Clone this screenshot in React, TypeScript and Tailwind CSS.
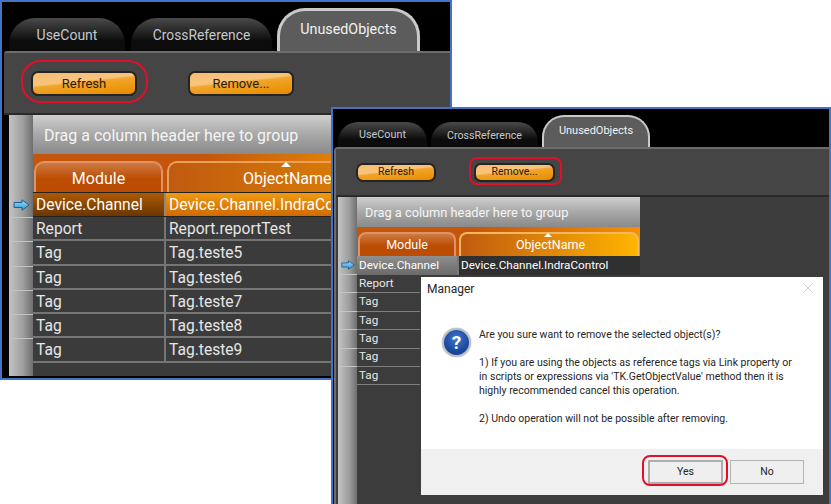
import React from "react";

const FONT = "font-['Roboto','Noto_Sans',sans-serif]";
const BTN =
  "flex items-center justify-center rounded-[7px] border-2 border-[#242424] text-[#2b1a05] bg-[linear-gradient(174deg,#f5bd72_0%,#f8c47c_40%,#f1a52c_47%,#ee9a14_70%,#e58a00_100%)]";

function Arrow({ w, h }: { w: number; h: number }) {
  return (
    <svg width={w} height={h} viewBox="0 0 17 12">
      <defs>
        <linearGradient id="arrowFill" x1="0" y1="0" x2="0" y2="1">
          <stop offset="0" stopColor="#9fdcf8" />
          <stop offset="1" stopColor="#2a9ad6" />
        </linearGradient>
      </defs>
      <path d="M1 3.5H9V0.8L16 6L9 11.2V8.5H1Z" fill="url(#arrowFill)" stroke="#1d5f96" strokeWidth="1" />
    </svg>
  );
}

function Question() {
  return (
    <div className="flex h-[29px] w-[29px] items-center justify-center rounded-full border-2 border-[#b9c0c9] bg-[radial-gradient(circle_at_50%_35%,#3f78cf_0%,#1c4aa0_60%,#10307a_100%)] text-[19px] font-bold leading-none text-white shadow-[0_0_1px_#555]">
      ?
    </div>
  );
}

const leftRows = [
  ["Report", "Report.reportTest"],
  ["Tag", "Tag.teste5"],
  ["Tag", "Tag.teste6"],
  ["Tag", "Tag.teste7"],
  ["Tag", "Tag.teste8"],
  ["Tag", "Tag.teste9"],
];

function LeftWindow() {
  return (
    <div className="absolute left-0 top-0 flex h-[380px] w-[452px] flex-col overflow-hidden border-2 border-[#4472c4] bg-black">
      <div className="flex h-[49px] shrink-0 items-end pl-[7px]">
        <div className="flex h-[33px] w-[116px] items-center justify-center rounded-t-[26px] bg-[linear-gradient(#4a4a4a,#0c0c0c_70%)] pt-[2px] text-[14px] text-[#c4c8cc]">
          UseCount
        </div>
        <div className="ml-[6px] flex h-[33px] w-[141px] items-center justify-center rounded-t-[26px] bg-[linear-gradient(#4a4a4a,#0c0c0c_70%)] pt-[2px] text-[13.8px] text-[#c4c8cc]">
          CrossReference
        </div>
        <div className="ml-[5px] flex h-[43px] w-[143px] items-start justify-center rounded-t-[28px] border-x-[3px] border-t-[3px] border-[#c9c9c9] bg-[#5c5c5c] pt-[8px] text-[14.3px] text-[#f2f2f2]">
          UnusedObjects
        </div>
      </div>
      <div className="ml-[2px] flex min-h-0 flex-1 flex-col rounded-tl-[3px] border-t-2 border-[#6c6c6c] bg-black">
        <div className="flex h-[62px] shrink-0 items-center gap-[51px] border-b-2 border-[#2a2a2a] bg-[#454545] pl-[27px]">
          <div className={`${BTN} h-[25px] w-[106px] pt-[2px] text-[13px]`}>Refresh</div>
          <div className={`${BTN} h-[25px] w-[106px] pt-[2px] text-[13px]`}>Remove...</div>
        </div>
        <div className="ml-[5px] flex min-h-0 flex-1 pb-[2px]">
          <div className="flex w-[24px] shrink-0 flex-col bg-[linear-gradient(90deg,#c4c4c4,#9c9c9c_60%,#6f6f6f)]">
            <div className="h-[77px] shrink-0" />
            <div className="flex h-[25px] items-center justify-center">
              <Arrow w={17} h={12} />
            </div>
            {leftRows.map((_, i) => (
              <div key={i} className="h-[24.3px] border-t border-[#c4c4c4]" />
            ))}
          </div>
          <div className="flex min-w-0 flex-1 flex-col bg-[#3b3b3b] text-[15.6px] text-[#e6e6e6]">
            <div className="flex h-[39px] shrink-0 items-center bg-[linear-gradient(#cfcfcf,#a8a8a8_50%,#8a8a8a)] pl-[11px] pt-[3px] text-[16px] text-[#f5f5f5]">
              Drag a column header here to group
            </div>
            <div className="flex h-[38px] shrink-0 items-end bg-[linear-gradient(90deg,#c4550a_0%,#c4550a_40%,#e88a08_80%)]">
              <div className="ml-[1px] flex h-[31px] w-[129px] items-center justify-center rounded-t-[10px] border-x-2 border-t-2 border-[#dc9468] bg-[linear-gradient(#cf7a42,#bb4c02_55%)] pt-[3px] text-[16px] text-white">
                Module
              </div>
              <div className="ml-[4px] flex h-[31px] flex-1 items-center rounded-t-[10px] border-l-2 border-t-2 border-[#e6a25c] bg-[linear-gradient(90deg,#c05a10,#e89000)] pl-[74px] pt-[3px] text-[16px] text-white">
                <span className="relative whitespace-nowrap">
                  <span className="absolute left-[38px] top-[-5px] h-0 w-0 border-x-[5px] border-b-[5px] border-x-transparent border-b-white" />
                  ObjectName
                </span>
              </div>
            </div>
            <div className="flex h-[25px] shrink-0 border-y border-[#222] text-white">
              <div className="flex w-[131px] items-center bg-[linear-gradient(#ad5a00,#6a3604)] pl-[3px] pt-[2px]">Device.Channel</div>
              <div className="flex flex-1 items-center whitespace-nowrap border-l-2 border-[#8a8a8a] bg-[linear-gradient(#f09a10,#d06a00)] pl-[3px] pt-[2px]">
                Device.Channel.IndraControl
              </div>
            </div>
            {leftRows.map(([a, b]) => (
              <div key={b} className="flex h-[24.3px] shrink-0 border-b-2 border-[#757575]">
                <div className="flex w-[131px] items-center pl-[3px] pt-[3px]">{a}</div>
                <div className="flex flex-1 items-center border-l-2 border-[#757575] pl-[3px] pt-[3px]">{b}</div>
              </div>
            ))}
          </div>
        </div>
      </div>
    </div>
  );
}

const rightRows = ["Report", "Tag", "Tag", "Tag", "Tag", "Tag"];

function RightWindow() {
  return (
    <div className="absolute left-[331px] top-[107px] flex h-[397px] w-[500px] flex-col overflow-hidden border-2 border-b-0 border-[#4472c4] bg-black">
      <div className="flex h-[38px] shrink-0 items-end pl-[5px]">
        <div className="flex h-[25px] w-[89px] items-center justify-center rounded-t-[20px] bg-[linear-gradient(#4a4a4a,#0c0c0c_70%)] pt-[2px] text-[10.8px] text-[#c4c8cc]">
          UseCount
        </div>
        <div className="ml-[4px] flex h-[25px] w-[107px] items-center justify-center rounded-t-[20px] bg-[linear-gradient(#4a4a4a,#0c0c0c_70%)] pt-[2px] text-[10.6px] text-[#c4c8cc]">
          CrossReference
        </div>
        <div className="ml-[4px] flex h-[32px] w-[108px] items-start justify-center rounded-t-[22px] border-x-2 border-t-2 border-[#c9c9c9] bg-[#5c5c5c] pt-[6px] text-[11px] text-[#f2f2f2]">
          UnusedObjects
        </div>
      </div>
      <div className="ml-[1px] flex min-h-0 flex-1 flex-col rounded-tl-[4px] border-l-2 border-t-2 border-[#6c6c6c] bg-[#3c3c3c]">
        <div className="flex h-[48px] shrink-0 items-center gap-[38px] border-b-2 border-[#2a2a2a] bg-[#454545] pl-[20px]">
          <div className={`${BTN} h-[19px] w-[80px] text-[10.5px]`}>Refresh</div>
          <div className={`${BTN} h-[19px] w-[81px] text-[10.5px]`}>Remove...</div>
        </div>
        <div className="ml-[2px] flex min-h-0 flex-1">
          <div className="flex w-[19px] shrink-0 flex-col bg-[linear-gradient(90deg,#c4c4c4,#9c9c9c_60%,#6f6f6f)]">
            <div className="h-[58px] shrink-0" />
            <div className="flex h-[19px] items-center justify-center">
              <Arrow w={14} h={10} />
            </div>
            {rightRows.map((_, i) => (
              <div key={i} className="h-[18.4px] border-t border-[#c4c4c4]" />
            ))}
          </div>
          <div className="flex min-w-0 flex-1 bg-[#3c3c3c]">
            <div className="flex w-[283px] shrink-0 flex-col text-[11.7px] text-[#e6e6e6]">
              <div className="flex h-[30px] shrink-0 items-center bg-[linear-gradient(#cfcfcf,#a8a8a8_50%,#8a8a8a)] pl-[8px] pt-[1px] text-[12.8px] text-[#f5f5f5]">
                Drag a column header here to group
              </div>
              <div className="flex h-[29px] shrink-0 items-end bg-[linear-gradient(90deg,#c4550a_0%,#c4550a_40%,#f59000_100%)] text-[12.5px]">
                <div className="ml-[1px] flex h-[24px] w-[98px] items-center justify-center rounded-t-[8px] border-x-2 border-t-2 border-[#dc9468] bg-[linear-gradient(#cf7a42,#bb4c02_55%)] text-white">
                  Module
                </div>
                <div className="ml-[3px] flex h-[24px] w-[180px] items-center justify-center rounded-t-[8px] border-x-2 border-t-2 border-[#f0b860] bg-[linear-gradient(90deg,#c05a10,#ffb400)] pl-[3px] text-white">
                  <span className="relative">
                    <span className="absolute left-[28px] top-[-3px] h-0 w-0 border-x-[4px] border-b-[4px] border-x-transparent border-b-white" />
                    ObjectName
                  </span>
                </div>
              </div>
              <div className="flex h-[19px] shrink-0 bg-[#303030] text-white">
                <div className="flex w-[100px] items-center bg-[linear-gradient(#8f8f8f,#6a6a6a)] pl-[2px]">Device.Channel</div>
                <div className="flex flex-1 items-center border-l-2 border-[#777] pl-[2px]">Device.Channel.IndraControl</div>
              </div>
              {rightRows.map((r, i) => (
                <div key={i} className="flex h-[18.4px] w-[63px] shrink-0 items-center border-b border-[#7f7f7f] pl-[2px]">
                  {r}
                </div>
              ))}
            </div>
          </div>
        </div>
      </div>
    </div>
  );
}

function Dialog() {
  return (
    <div className="absolute left-[421px] top-[277px] flex h-[218px] w-[402px] flex-col bg-white text-[10.5px] leading-[14px] text-[#262626]">
      <div className="flex h-[24px] shrink-0 items-start justify-between pl-[6px] pr-[10px] pt-[5px]">
        <span className="text-[12px]">Manager</span>
        <svg width="10" height="10" viewBox="0 0 10 10" className="mt-[1px]">
          <path d="M0.5 0.5L9.5 9.5M9.5 0.5L0.5 9.5" stroke="#cfcfcf" strokeWidth="1" fill="none" />
        </svg>
      </div>
      <div className="flex flex-1 pl-[21px] pt-[27px]">
        <div className="shrink-0">
          <Question />
        </div>
        <div className="ml-[8px] flex flex-col gap-[14px]">
          <div>Are you sure want to remove the selected object(s)?</div>
          <div className="whitespace-nowrap">
            1) If you are using the objects as reference tags via Link property or
            <br />
            in scripts or expressions via 'TK.GetObjectValue' method then it is
            <br />
            highly recommended cancel this operation.
          </div>
          <div>2) Undo operation will not be possible after removing.</div>
        </div>
      </div>
      <div className="flex h-[46px] shrink-0 items-center justify-end gap-[7px] bg-[#f0f0f0] pr-[19px]">
        <div className="flex h-[24px] w-[75px] items-center justify-center border-2 border-[#adadad] bg-[#efefef]">Yes</div>
        <div className="flex h-[24px] w-[74px] items-center justify-center border border-[#b5b5b5] bg-[#efefef]">No</div>
      </div>
    </div>
  );
}

function Callout({ className }: { className: string }) {
  return <div className={`absolute border-2 border-[#e0102a] ${className}`} />;
}

export default function App() {
  return (
    <div className={`relative h-[504px] w-[831px] overflow-hidden bg-white ${FONT}`}>
      <LeftWindow />
      <Callout className="left-[21px] top-[60px] h-[43px] w-[127px] rounded-[20px]" />
      <RightWindow />
      <Callout className="left-[469px] top-[157px] h-[28px] w-[93px] rounded-[8px]" />
      <Dialog />
      <Callout className="left-[642px] top-[455px] h-[31px] w-[86px] rounded-[8px]" />
    </div>
  );
}
